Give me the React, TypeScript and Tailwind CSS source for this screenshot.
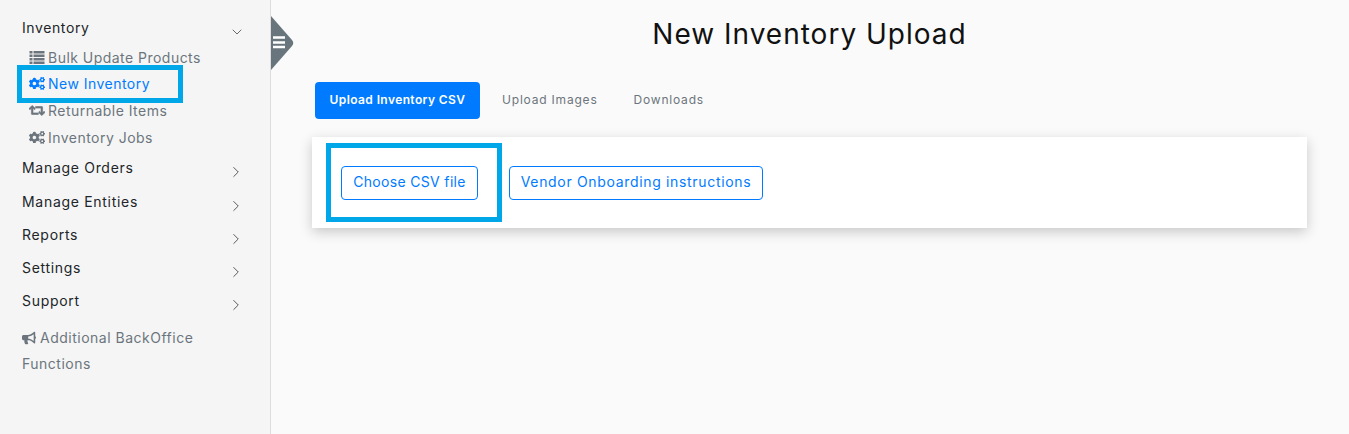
import React from 'react';
import { ChevronDown, ChevronRight } from 'lucide-react';
import { FaBullhorn, FaCogs, FaRetweet } from 'react-icons/fa';

const ListIcon: React.FC<{ className?: string }> = ({ className }) => (
  <svg viewBox="0 0 15 13" fill="currentColor" className={className}>
    <path d="M0 0h3v2.5H0zM4 0h11v2.5H4zM0 3.5h3V6H0zM4 3.5h11V6H4zM0 7h3v2.5H0zM4 7h11v2.5H4zM0 10.5h3V13H0zM4 10.5h11V13H4z" />
  </svg>
);

const subItems = [
  { label: 'Bulk Update Products', icon: ListIcon, active: false, bold: false },
  { label: 'New Inventory', icon: FaCogs, active: true, bold: false },
  { label: 'Returnable Items', icon: FaRetweet, active: false, bold: true },
  { label: 'Inventory Jobs', icon: FaCogs, active: false, bold: false },
];

const menuItems = ['Manage Orders', 'Manage Entities', 'Reports', 'Settings', 'Support'];

const Sidebar: React.FC = () => (
  <aside className="relative w-[271px] shrink-0 border-r border-[#dddddd] bg-[#f5f5f5] pt-[14px] pl-[22px]">
    <div className="flex h-[26px] items-center justify-between pr-[25px] text-[14px] tracking-[0.6px] text-[#212529]">
      <span>Inventory</span>
      <ChevronDown size={16} strokeWidth={1} className="mt-[9px]" />
    </div>
    <ul className="mt-[4px] mb-[1px]">
      {subItems.map(({ label, icon: Icon, active, bold }) => (
        <li
          key={label}
          className={`flex h-[26.6px] items-center gap-[3px] pl-[7px] text-[14px] tracking-[0.47px] ${
            active ? 'text-[#007bff]' : 'text-[#6c757d]'
          }`}
        >
          <Icon className={`h-[13px] w-[16px] ${bold ? 'stroke-current stroke-[24px]' : ''}`} />
          <span>{label}</span>
        </li>
      ))}
    </ul>
    {menuItems.map((item) => (
      <div
        key={item}
        className="flex h-[33.2px] items-center justify-between pr-[25px] text-[14px] tracking-[0.7px] text-[#212529]"
      >
        <span>{item}</span>
        <ChevronRight size={18} strokeWidth={1} className="mt-[9px]" />
      </div>
    ))}
    <p className="mt-[8px] w-[190px] text-[14px] leading-[26px] tracking-[0.5px] text-[#6c757d]">
      <FaBullhorn className="mr-[4px] inline h-[14px] w-[14px] align-[-2px]" />
      Additional BackOffice Functions
    </p>
    {/* annotation around the active link */}
    <div className="absolute top-[65px] left-[17px] h-[38px] w-[166px] border-[5px] border-[#00a7e8]" />
    {/* collapse toggle */}
    <svg width="24" height="56" viewBox="0 0 24 56" className="absolute top-[15px] left-[271px]">
      <path d="M0 1 L21 25 Q23.5 28 21 31 L0 55 Z" fill="#68757d" />
      <path d="M2 22.5h12M2 27.5h12M2 32h12" stroke="#ffffff" strokeWidth="2.4" />
    </svg>
  </aside>
);

export default function App() {
  return (
    <div className="flex h-[434px] overflow-hidden bg-[#fafafa] font-['Inter','Liberation_Sans',sans-serif]">
      <Sidebar />
      <main className="flex-1 pr-[42px] pl-[41px]">
        <h1 className="pt-[13px] text-center text-[28px] leading-[42px] font-normal tracking-[1px] text-[#111111]">
          New Inventory Upload
        </h1>
        <div className="mt-[27px] ml-[3px] flex items-center text-[12px]">
          <button className="h-[37px] w-[165px] rounded-[4px] bg-[#007bff] pb-[2px] font-semibold tracking-[0.4px] text-white">
            Upload Inventory CSV
          </button>
          <button className="ml-[22px] pb-[2px] tracking-[0.8px] text-[#6c757d]">Upload Images</button>
          <button className="ml-[36px] pb-[2px] tracking-[0.8px] text-[#6c757d]">Downloads</button>
        </div>
        <div className="relative mt-[18px] flex h-[91px] items-center gap-[31px] bg-white pl-[29px] shadow-[0_4px_12px_rgba(0,0,0,0.2)]">
          <button className="h-[34px] w-[137px] rounded-[4px] border border-[#007bff] pb-[2px] text-[14px] tracking-[0.33px] text-[#007bff]">
            Choose CSV file
          </button>
          <button className="h-[34px] w-[254px] rounded-[4px] border border-[#007bff] pb-[2px] text-[14px] tracking-[0.67px] text-[#007bff]">
            Vendor Onboarding instructions
          </button>
          {/* annotation around the upload button */}
          <div className="absolute top-[6px] left-[14px] h-[79px] w-[176px] border-[5px] border-[#00a7e8]" />
        </div>
      </main>
    </div>
  );
}
